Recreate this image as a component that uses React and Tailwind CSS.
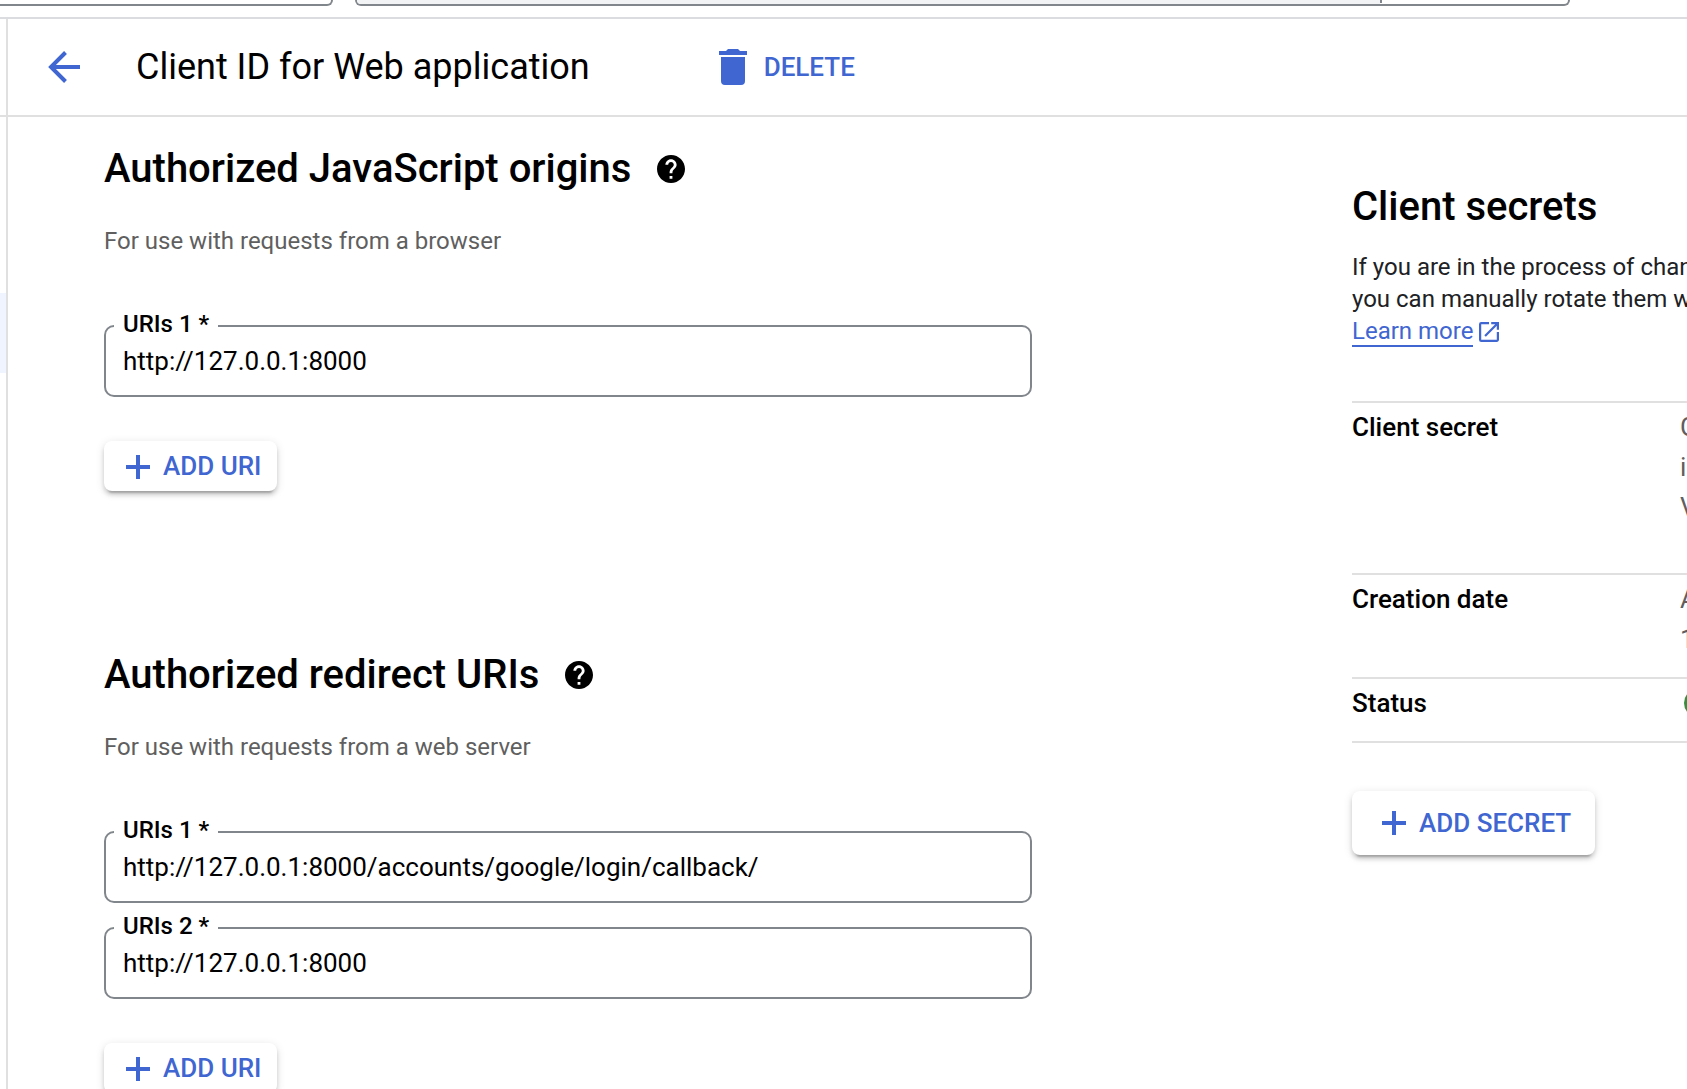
import { useState } from "react";

const HelpIcon = () => (
  <svg viewBox="2 2 20 20" className="w-7 h-7" fill="currentColor" aria-hidden="true">
    <path d="M12 2C6.48 2 2 6.48 2 12s4.48 10 10 10 10-4.48 10-10S17.52 2 12 2zm1 17h-2v-2h2v2zm2.07-7.75l-.9.92C13.45 12.9 13 13.5 13 15h-2v-.5c0-1.1.45-2.1 1.17-2.83l1.24-1.26c.37-.36.59-.86.59-1.41 0-1.1-.9-2-2-2s-2 .9-2 2H8c0-2.21 1.79-4 4-4s4 1.79 4 4c0 .88-.36 1.68-.93 2.25z" />
  </svg>
);

const PlusIcon = () => (
  <svg viewBox="0 0 24 24" className="w-6 h-6" fill="currentColor" aria-hidden="true">
    <path d="M10 0h4v10h10v4H14v10h-4V14H0v-4h10z" />
  </svg>
);

const SectionTitle = ({ children }) => (
  <div className="flex items-center gap-[26px]">
    <h2 className="text-[40px] leading-12 font-medium whitespace-nowrap">{children}</h2>
    <button type="button" aria-label="Help">
      <HelpIcon />
    </button>
  </div>
);

const UriField = ({ id, label, initial }) => {
  const [value, setValue] = useState(initial);

  return (
    <fieldset className="min-w-0 border-2 border-[#80868b] rounded-[10px] px-2 pb-[15px]">
      <legend className="h-8 px-[9px] text-2xl leading-7 font-medium">
        <label htmlFor={id}>{label} *</label>
      </legend>
      <input
        id={id}
        type="text"
        required
        value={value}
        onChange={(e) => setValue(e.target.value)}
        className="block w-full h-[38px] px-[9px] text-[26px] bg-transparent focus:outline-none"
      />
    </fieldset>
  );
};

const RaisedButton = ({ className, children }) => (
  <button
    type="button"
    className={`flex items-center gap-[13px] rounded-lg bg-white text-[26px] font-medium text-[#3f66d1] whitespace-nowrap shadow-[0_6px_2px_-4px_rgba(0,0,0,0.2),0_4px_4px_0_rgba(0,0,0,0.14),0_2px_10px_0_rgba(0,0,0,0.12)] ${className}`}
  >
    <PlusIcon />
    {children}
  </button>
);

const App = () => {
  return (
    <div className="h-screen overflow-hidden flex flex-col bg-white text-black font-[Roboto,sans-serif]">
      {/* ── Top bar ── */}
      <div className="flex items-start h-[19px] shrink-0 border-b-2 border-[#dadce0]">
        <div className="w-[333px] h-[6px] border-r-2 border-b-2 border-[#80868b] rounded-br-lg" />
        <div className="ml-[22px] flex w-[1215px] h-[6px] border-x-2 border-b-2 border-[#80868b] rounded-b-lg overflow-hidden">
          <div className="flex-1 bg-[#f1f3f4]" />
          <div className="w-[188px] h-[3px] border-l-2 border-[#80868b]" />
        </div>
      </div>

      <div className="flex flex-1 min-h-0">
        {/* ── Side nav edge ── */}
        <nav className="w-2 shrink-0 border-r-2 border-[#e0e0e0]">
          <div className="h-[98px] border-b-2 border-[#e0e0e0]" />
          <div className="mt-44 h-20 bg-[#f0f4ff]" />
        </nav>

        <div className="flex-1 min-w-0">
          {/* ── Page header ── */}
          <header className="flex items-center h-[98px] pl-10 border-b-2 border-[#e0e0e0]">
            <button type="button" aria-label="Back" className="text-[#3f66d1]">
              <svg viewBox="0 0 32 32" className="w-8 h-8" fill="none" stroke="currentColor" strokeWidth="4">
                <path d="M32 16H3M17.500 1.500L3 16l14.500 14.500" />
              </svg>
            </button>
            <h1 className="ml-14 text-4xl leading-12 whitespace-nowrap">Client ID for Web application</h1>
            <button
              type="button"
              className="ml-[129px] flex items-center gap-[17px] text-[26px] font-medium text-[#3f66d1]"
            >
              <svg viewBox="0 0 28 36" className="w-7 h-9" fill="currentColor" aria-hidden="true">
                <path d="M2 8h24v24a4 4 0 0 1-4 4H6a4 4 0 0 1-4-4zM0 2h7l2-2h10l2 2h7v4H0z" />
              </svg>
              DELETE
            </button>
          </header>

          <main className="flex">
            {/* ── URIs form ── */}
            <form className="flex-1 min-w-0 pt-7 pl-24 pr-80">
              <section>
                <SectionTitle>Authorized JavaScript origins</SectionTitle>
                <p className="mt-8 text-2xl text-[#5f5f5f]">For use with requests from a browser</p>
                <div className="mt-[53px]">
                  <UriField id="origin-1" label="URIs 1" initial="http://127.0.0.1:8000" />
                </div>
                <RaisedButton className="mt-11 h-[50px] pt-px pl-[22px] pr-4">ADD URI</RaisedButton>
              </section>

              <section className="mt-40">
                <SectionTitle>Authorized redirect URIs</SectionTitle>
                <p className="mt-8 text-2xl text-[#5f5f5f]">For use with requests from a web server</p>
                <div className="mt-[53px] flex flex-col gap-[9px]">
                  <UriField
                    id="redirect-1"
                    label="URIs 1"
                    initial="http://127.0.0.1:8000/accounts/google/login/callback/"
                  />
                  <UriField id="redirect-2" label="URIs 2" initial="http://127.0.0.1:8000" />
                </div>
                <RaisedButton className="mt-11 h-[50px] pt-px pl-[22px] pr-4">ADD URI</RaisedButton>
              </section>
            </form>

            {/* ── Client secrets ── */}
            <aside className="w-[335px] shrink-0 pt-[66px]">
              <h2 className="text-[40px] leading-12 font-medium">Client secrets</h2>
              <p className="mt-5 text-2xl text-[#202124] whitespace-nowrap">
                If you are in the process of changing client secrets,
                <br />
                you can manually rotate them without downtime.
                <br />
                <a href="#learn-more" className="text-[#3f66d1]">
                  <span className="border-b-2 border-[#3f66d1]">Learn more</span>
                  <svg
                    viewBox="3 3 18 18"
                    className="ml-[6px] inline-block w-5 h-5 align-[-3px]"
                    fill="currentColor"
                    aria-hidden="true"
                  >
                    <path d="M19 19H5V5h7V3H5a2 2 0 0 0-2 2v14a2 2 0 0 0 2 2h14c1.100 0 2-.9 2-2v-7h-2v7zM14 3v2h3.590l-9.830 9.830 1.410 1.410L19 6.410V10h2V3h-7z" />
                  </svg>
                </a>
              </p>

              <table className="mt-[54px] w-full table-fixed border-separate border-spacing-0 border-b-2 border-[#e0e0e0] text-[26px] leading-10 text-left">
                <tbody>
                  <tr className="h-[172px] align-top">
                    <th className="w-[328px] pt-1 border-t-2 border-[#e0e0e0] font-medium">Client secret</th>
                    <td className="pt-1 border-t-2 border-[#e0e0e0] text-[#5f5f5f]">
                      G<br />i<br />V
                    </td>
                  </tr>
                  <tr className="h-[104px] align-top">
                    <th className="pt-1 border-t-2 border-[#e0e0e0] font-medium">Creation date</th>
                    <td className="pt-1 border-t-2 border-[#e0e0e0] text-[#5f5f5f]">
                      A<br />1
                    </td>
                  </tr>
                  <tr className="h-16 align-top">
                    <th className="pt-1 border-t-2 border-[#e0e0e0] font-medium">Status</th>
                    <td className="pt-1 border-t-2 border-[#e0e0e0]">
                      <svg viewBox="0 0 28 28" className="ml-1 mt-[6px] w-7 h-7 max-w-none" role="img" aria-label="Enabled">
                        <circle cx="14" cy="14" r="14" fill="#388e3c" />
                        <path d="M7 14l5 5 9-9" fill="none" stroke="#fff" strokeWidth="3" />
                      </svg>
                    </td>
                  </tr>
                </tbody>
              </table>

              <RaisedButton className="mt-12 h-16 pl-[30px] pr-6">ADD SECRET</RaisedButton>
            </aside>
          </main>
        </div>
      </div>
    </div>
  );
};

export default App;
